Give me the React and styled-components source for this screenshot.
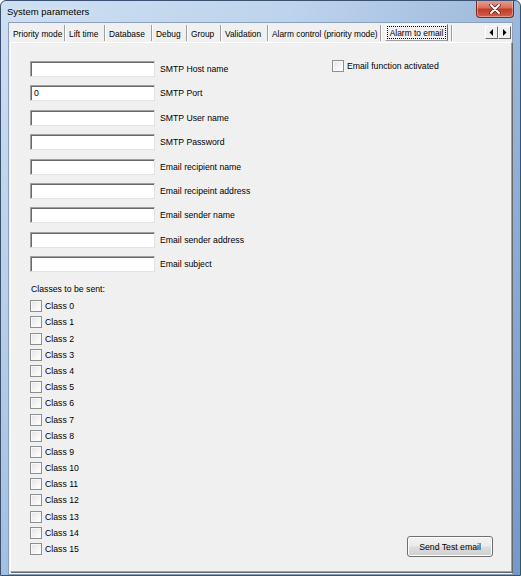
import React from 'react'
import styled, { createGlobalStyle } from 'styled-components'

const GlobalStyle = createGlobalStyle`
  html, body {
    margin: 0;
    padding: 0;
    background: #ffffff;
  }
  body {
    font-family: "Liberation Sans", Arial, sans-serif;
    font-size: 8.7px;
    color: #000;
  }
`

const Window = styled.div`
  width: 521px;
  height: 576px;
  box-sizing: border-box;
  display: flex;
  flex-direction: column;
  border: 1px solid #3c5170;
  border-radius: 6px 6px 0 0;
  background:
    linear-gradient(90deg, rgba(255, 255, 255, 0.25) 0%, rgba(255, 255, 255, 0) 55%, rgba(60, 100, 160, 0.25) 100%),
    linear-gradient(180deg, #bed5ee 0%, #a8c4e5 40%, #86aad8 100%);
  overflow: hidden;
`

const TitleBar = styled.div`
  height: 21px;
  flex: 0 0 21px;
  display: flex;
  align-items: flex-start;
  justify-content: space-between;
  padding-left: 6px;
`

const Title = styled.span`
  font-size: 9.5px;
  line-height: 22px;
  color: #000;
  text-shadow: 0 0 6px rgba(255, 255, 255, 0.9);
`

const CloseButton = styled.div`
  width: 38px;
  height: 18px;
  margin-right: 6px;
  margin-top: -1px;
  box-sizing: border-box;
  border: 1px solid #7b2a22;
  border-top: none;
  border-radius: 0 0 4px 4px;
  background: linear-gradient(180deg, #e9a393 0%, #d7705e 45%, #c23b26 55%, #d1614c 100%);
  display: flex;
  align-items: center;
  justify-content: center;
  box-shadow: inset 0 0 0 1px rgba(255, 255, 255, 0.35);
`

const Client = styled.div`
  flex: 1;
  margin: 0 7px 7px 7px;
  background: #f0f0f0;
  border: 1px solid #8aa0bd;
  display: flex;
  flex-direction: column;
`

const TabStrip = styled.div`
  height: 19px;
  flex: 0 0 19px;
  display: flex;
  align-items: flex-end;
  padding-left: 1px;
  padding-right: 1px;
  font-size: 8.4px;
`

const Tab = styled.div`
  width: ${p => p.$w}px;
  height: 16px;
  box-sizing: border-box;
  display: flex;
  align-items: center;
  padding-left: 3px;
  padding-top: 1px;
  margin-bottom: 1px;
  white-space: nowrap;
  border-right: 1px solid #ffffff;
  box-shadow: inset -1px 0 0 #a0a0a0;
`

const ActiveTab = styled.div`
  margin-left: 3px;
  width: 63px;
  height: 17px;
  box-sizing: border-box;
  padding: 1px;
  border-top: 1px solid #ffffff;
  border-left: 1px solid #ffffff;
  border-right: 1px solid #696969;
  border-bottom: 1px solid #a0a0a0;
  background: #f0f0f0;
  margin-bottom: 1px;
`

const FocusRect = styled.div`
  height: 100%;
  box-sizing: border-box;
  border: 1px dotted #000;
  display: flex;
  align-items: center;
  justify-content: center;
  white-space: nowrap;
`

const TabGap = styled.div`
  width: 2px;
  height: 16px;
  margin-left: 2px;
  margin-bottom: 1px;
  border-right: 1px solid #ffffff;
  box-shadow: inset -1px 0 0 #a0a0a0;
`

const Scroller = styled.div`
  margin-left: auto;
  margin-bottom: 3px;
  display: flex;
`

const ScrollButton = styled.div`
  width: 13px;
  height: 13px;
  box-sizing: border-box;
  background: #f0f0f0;
  border-top: 1px solid #ffffff;
  border-left: 1px solid #ffffff;
  border-right: 1px solid #696969;
  border-bottom: 1px solid #696969;
  display: flex;
  align-items: center;
  justify-content: center;
`

const Panel = styled.div`
  flex: 1;
  margin: 0 0 2px 1px;
  box-sizing: border-box;
  border-top: 1px solid #ffffff;
  border-left: 1px solid #ffffff;
  border-right: 1px solid #a0a0a0;
  border-bottom: 1px solid #a0a0a0;
  box-shadow: 1px 1px 0 #696969;
  display: flex;
  padding: 18px 0 14px 19px;
`

const LeftColumn = styled.div`
  flex: 0 0 302px;
  display: flex;
  flex-direction: column;
`

const Fields = styled.div`
  display: flex;
  flex-direction: column;
  gap: 8.4px;
`

const FieldRow = styled.div`
  display: flex;
  align-items: center;
  height: 16px;
`

const TextBox = styled.div`
  width: 125px;
  height: 16px;
  box-sizing: border-box;
  background: #ffffff;
  border-top: 1px solid #a0a0a0;
  border-left: 1px solid #a0a0a0;
  border-right: 1px solid #e3e3e3;
  border-bottom: 1px solid #e3e3e3;
  box-shadow: inset 1px 1px 0 #696969;
  padding-left: 3px;
  display: flex;
  align-items: center;
`

const FieldLabel = styled.span`
  margin-left: 5px;
  white-space: nowrap;
`

const SectionTitle = styled.div`
  margin-top: 9px;
  height: 17px;
  line-height: 17px;
  padding-left: 1px;
`

const CheckRow = styled.label`
  display: flex;
  align-items: center;
  height: 16.2px;
  white-space: nowrap;
`

const Box = styled.span`
  width: 12px;
  height: 12px;
  flex: 0 0 12px;
  box-sizing: border-box;
  border: 1px solid #8e8f8f;
  background: linear-gradient(135deg, #e2e2e2 0%, #f6f6f6 60%, #ffffff 100%);
  box-shadow: inset 0 0 0 1px #f8f8f8;
  margin-right: 3px;
`

const RightColumn = styled.div`
  flex: 1;
  display: flex;
  flex-direction: column;
  justify-content: space-between;
  align-items: flex-start;
  padding-right: 18px;
`

const EmailRow = styled(CheckRow)`
  margin-top: -3px;
`

const Button = styled.button`
  align-self: flex-end;
  width: 86px;
  height: 21px;
  font-family: "Liberation Sans", Arial, sans-serif;
  font-size: 8.7px;
  color: #000;
  border: 1px solid #707070;
  border-radius: 3px;
  background: linear-gradient(180deg, #f2f2f2 0%, #ebebeb 48%, #dddddd 52%, #cfcfcf 100%);
  box-shadow: inset 0 0 0 1px #fcfcfc;
  padding: 0;
`

const tabs = [
  { label: 'Priority mode', w: 56 },
  { label: 'Lift time', w: 40 },
  { label: 'Database', w: 47 },
  { label: 'Debug', w: 35 },
  { label: 'Group', w: 34 },
  { label: 'Validation', w: 47 },
  { label: 'Alarm control (priority mode)', w: 113 },
]

const fields = [
  { label: 'SMTP Host name', value: '' },
  { label: 'SMTP Port', value: '0' },
  { label: 'SMTP User name', value: '' },
  { label: 'SMTP Password', value: '' },
  { label: 'Email recipient name', value: '' },
  { label: 'Email recipeint address', value: '' },
  { label: 'Email sender name', value: '' },
  { label: 'Email sender address', value: '' },
  { label: 'Email subject', value: '' },
]

const classes = Array.from({ length: 16 }, (_, i) => 'Class ' + i)

const CloseIcon = () => (
  <svg width="12" height="10" viewBox="0 0 12 10">
    <path d="M2 1 L10 9 M10 1 L2 9" stroke="#5a1a12" strokeWidth="3.4" strokeLinecap="round" />
    <path d="M2 1 L10 9 M10 1 L2 9" stroke="#ffffff" strokeWidth="2" strokeLinecap="round" />
  </svg>
)

const Arrow = ({ dir }) => (
  <svg width="5" height="7" viewBox="0 0 5 7">
    {dir === 'left'
      ? <polygon points="4,0 4,7 0.5,3.5" fill="#000" />
      : <polygon points="1,0 1,7 4.5,3.5" fill="#000" />}
  </svg>
)

export default function App() {
  return (
    <>
      <GlobalStyle />
      <Window>
        <TitleBar>
          <Title>System parameters</Title>
          <CloseButton>
            <CloseIcon />
          </CloseButton>
        </TitleBar>
        <Client>
          <TabStrip>
            {tabs.map(t => (
              <Tab key={t.label} $w={t.w}>{t.label}</Tab>
            ))}
            <ActiveTab>
              <FocusRect>Alarm to email</FocusRect>
            </ActiveTab>
            <TabGap />
            <Scroller>
              <ScrollButton><Arrow dir="left" /></ScrollButton>
              <ScrollButton><Arrow dir="right" /></ScrollButton>
            </Scroller>
          </TabStrip>
          <Panel>
            <LeftColumn>
              <Fields>
                {fields.map(f => (
                  <FieldRow key={f.label}>
                    <TextBox>{f.value}</TextBox>
                    <FieldLabel>{f.label}</FieldLabel>
                  </FieldRow>
                ))}
              </Fields>
              <SectionTitle>Classes to be sent:</SectionTitle>
              {classes.map(c => (
                <CheckRow key={c}>
                  <Box />
                  {c}
                </CheckRow>
              ))}
            </LeftColumn>
            <RightColumn>
              <EmailRow>
                <Box />
                Email function activated
              </EmailRow>
              <Button>Send Test email</Button>
            </RightColumn>
          </Panel>
        </Client>
      </Window>
    </>
  )
}
